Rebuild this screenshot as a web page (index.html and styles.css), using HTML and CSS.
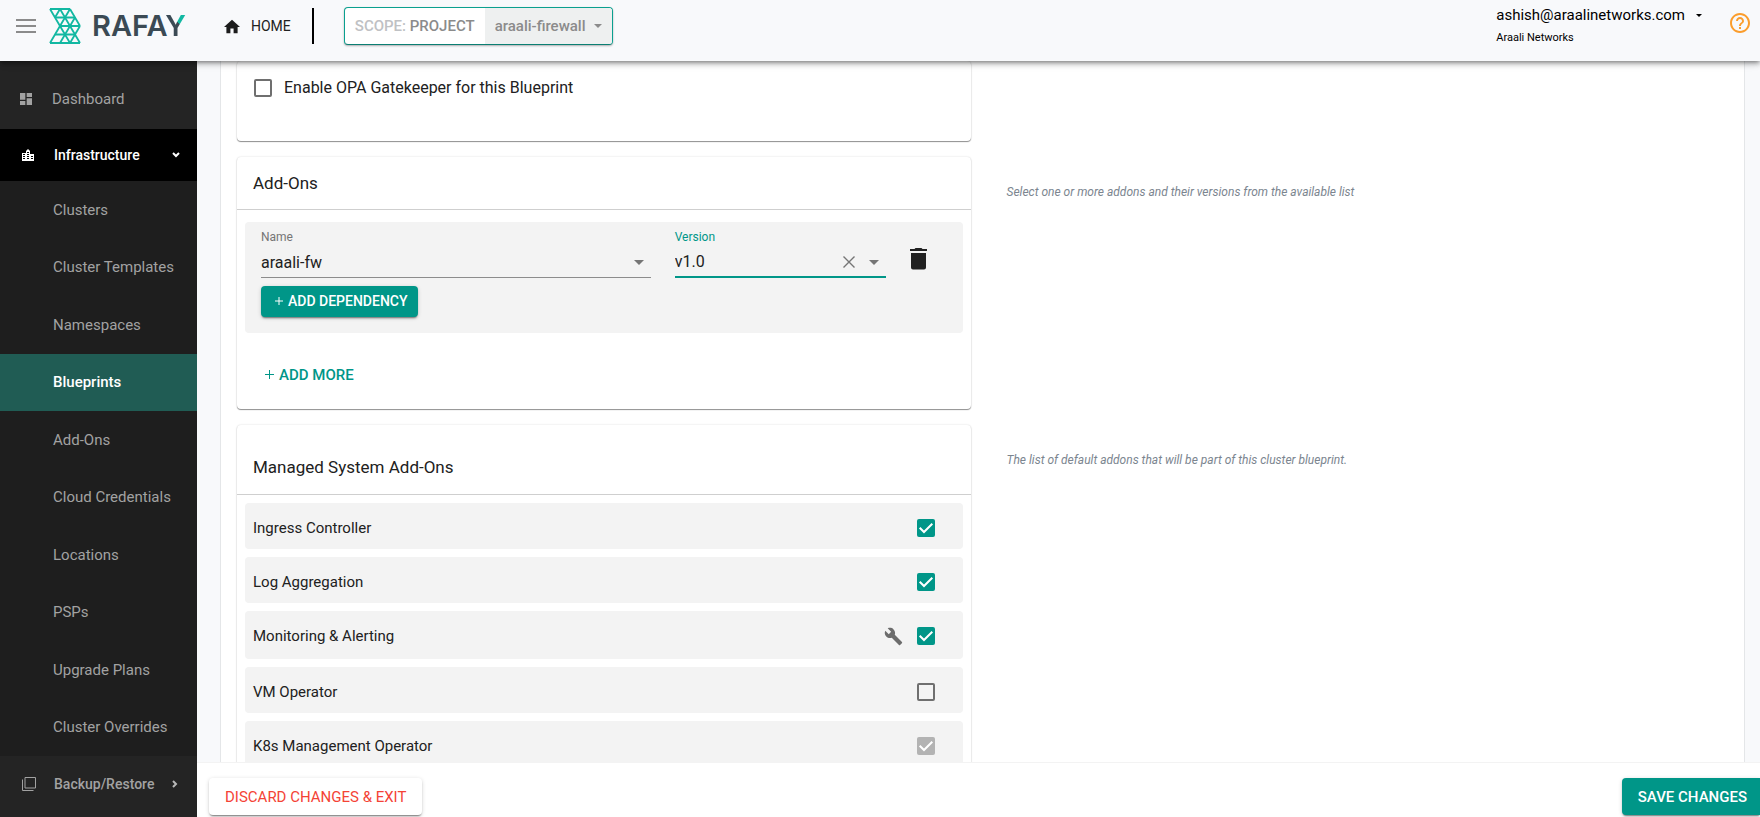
FILE: index.html
```html
<!DOCTYPE html>
<html lang="en">
<head>
<meta charset="utf-8">
<meta name="viewport" content="width=device-width, initial-scale=1">
<title>Blueprint - Rafay</title>
<link rel="stylesheet" href="styles.css">
</head>
<body>
<div class="app">
  <header class="topbar">
    <button class="icon-button menu-button" type="button" aria-label="Toggle menu">
      <svg width="20" height="14" viewBox="0 0 20 14" fill="#8b8b8b"><path d="M0 0h20v2H0zM0 6h20v2H0zM0 12h20v2H0z"/></svg>
    </button>
    <a class="brand" href="#" aria-label="Rafay">
      <svg class="brand-mark" width="32" height="36" viewBox="0 0 32 36" fill="none" stroke="#12b8a2" stroke-width="1.800" stroke-linejoin="round">
        <path d="M1 1H21M6 9.500H26M11 18H31M6 26.500H26M1 35H31"/>
        <path d="M1 1L21 35M11 1L31 35M21 1L31 18"/>
        <path d="M11 1L6 9.500M21 1L1 35M26 9.500L11 35M31 18L21 35"/>
      </svg>
      <span class="brand-name">RAFA<span class="brand-y">Y</span></span>
    </a>
    <a class="home-link" href="#">
      <svg width="16" height="15" viewBox="0 0 20 17" fill="#1c1c1c"><path d="M8 17v-6h4v6h5V9h3L10 0 0 9h3v8z"/></svg>
      HOME
    </a>
    <span class="divider"></span>
    <div class="scope">
      <label class="scope-label" for="project"><span class="scope-prefix">SCOPE:</span> PROJECT</label>
      <div class="scope-value">
        <select class="plain-select" id="project"><option>araali-firewall</option></select>
        <svg width="8" height="4" viewBox="0 0 10 5" fill="#8b8b8b"><path d="M0 0h10L5 5z"/></svg>
      </div>
    </div>
    <div class="account">
      <button class="account-button" type="button">ashish@araalinetworks.com
        <svg width="6" height="3" viewBox="0 0 10 5"><path d="M0 0h10L5 5z"/></svg>
      </button>
      <span class="account-org">Araali Networks</span>
    </div>
    <button class="icon-button help-button" type="button" aria-label="Help">
      <svg width="20" height="20" viewBox="2 2 20 20" fill="#fb9d2c"><path d="M11 18h2v-2h-2v2zm1-16C6.480 2 2 6.480 2 12s4.480 10 10 10 10-4.480 10-10S17.520 2 12 2zm0 18c-4.410 0-8-3.590-8-8s3.590-8 8-8 8 3.590 8 8-3.590 8-8 8zm0-14c-2.210 0-4 1.790-4 4h2c0-1.100.9-2 2-2s2 .9 2 2c0 2-3 1.750-3 5h2c0-2.250 3-2.500 3-5 0-2.210-1.790-4-4-4z"/></svg>
    </button>
  </header>

  <nav class="sidebar" aria-label="Main">
    <a class="nav-item nav-dashboard" href="#">
      <span class="nav-icon"><svg width="12" height="12" viewBox="3 3 18 18" fill="#a2a2a2"><path d="M3 13h8V3H3v10zm0 8h8v-6H3v6zm10 0h8V11h-8v10zm0-18v6h8V3h-8z"/></svg></span>
      Dashboard
    </a>
    <a class="nav-item nav-open" href="#">
      <span class="nav-icon"><svg width="12" height="12" viewBox="0 0 12 12" fill="#fff" fill-rule="evenodd"><path d="M0 4h4V2l2-2 2 2v3h4v7H0zM1 5v1h2V5zM1 7v1h2V7zM1 9v1h2V9zM5 3v1h2V3zM5 5v1h2V5zM5 7v1h2V7zM5 9v1h2V9zM9 7v1h2V7zM9 9v1h2V9z"/></svg></span>
      <span class="nav-text">Infrastructure</span>
      <svg width="8" height="6" viewBox="0 0 8 6" fill="none" stroke="#fff" stroke-width="2"><path d="M1 1l3 3 3-3"/></svg>
    </a>
    <div class="subnav">
      <a class="subnav-item" href="#">Clusters</a>
      <a class="subnav-item" href="#">Cluster Templates</a>
      <a class="subnav-item" href="#">Namespaces</a>
      <a class="subnav-item is-active" href="#" aria-current="page">Blueprints</a>
      <a class="subnav-item" href="#">Add-Ons</a>
      <a class="subnav-item" href="#">Cloud Credentials</a>
      <a class="subnav-item" href="#">Locations</a>
      <a class="subnav-item" href="#">PSPs</a>
      <a class="subnav-item" href="#">Upgrade Plans</a>
      <a class="subnav-item" href="#">Cluster Overrides</a>
    </div>
    <a class="nav-item nav-backup" href="#">
      <span class="nav-icon"><svg width="14" height="14" viewBox="0 0 14 14" fill="none" stroke="#a2a2a2" stroke-width="1"><path d="M3 .5h10.500v10.500H3zM.5 2.500v11h11"/></svg></span>
      <span class="nav-text">Backup/Restore</span>
      <svg width="6" height="8" viewBox="0 0 6 8" fill="none" stroke="#b8b8b8" stroke-width="2"><path d="M1 1l3 3-3 3"/></svg>
    </a>
  </nav>

  <main class="content">
    <div class="sheet">
      <section class="card card-opa">
        <label class="check-label"><input class="checkbox" type="checkbox">Enable OPA Gatekeeper for this Blueprint</label>
      </section>

      <section class="card">
        <h2 class="card-title">Add-Ons</h2>
        <div class="addon">
          <div class="addon-fields">
            <div class="field field-name">
              <label class="field-label" for="addon-name">Name</label>
              <div class="field-control">
                <select class="plain-select" id="addon-name"><option>araali-fw</option></select>
                <svg class="caret" width="10" height="5" viewBox="0 0 10 5" fill="#757575"><path d="M0 0h10L5 5z"/></svg>
              </div>
            </div>
            <div class="field field-version is-focused">
              <label class="field-label" for="addon-version">Version</label>
              <div class="field-control">
                <select class="plain-select" id="addon-version"><option>v1.0</option></select>
                <button class="icon-button" type="button" aria-label="Clear version">
                  <svg width="12" height="12" viewBox="0 0 12 12" stroke="#757575" stroke-width="1.400"><path d="M.5.5l11 11M11.500.5l-11 11"/></svg>
                </button>
                <svg class="caret" width="10" height="5" viewBox="0 0 10 5" fill="#757575"><path d="M0 0h10L5 5z"/></svg>
              </div>
            </div>
            <button class="icon-button delete-button" type="button" aria-label="Delete add-on">
              <svg width="17" height="22" viewBox="0 0 17 22" fill="#212121"><path d="M1 5h15v14.500a2 2 0 0 1-2 2H3a2 2 0 0 1-2-2zM0 1h4.500l1-1h6l1 1H17v2H0z"/></svg>
            </button>
          </div>
          <button class="button button-primary button-small" type="button">
            <svg width="8" height="8" viewBox="0 0 8 8" fill="none" stroke="currentColor"><path d="M4 0v8M0 4h8"/></svg>
            ADD DEPENDENCY
          </button>
        </div>
        <button class="button button-text" type="button">
          <svg width="9" height="9" viewBox="0 0 9 9" fill="none" stroke="currentColor"><path d="M4.500 0v9M0 4.500h9"/></svg>
          ADD MORE
        </button>
      </section>
      <p class="hint">Select one or more addons and their versions from the available list</p>

      <section class="card">
        <h2 class="card-title card-title-tall">Managed System Add-Ons</h2>
        <div class="managed">
          <div class="managed-row">
            <label class="managed-name" for="ingress">Ingress Controller</label>
            <input class="checkbox" type="checkbox" id="ingress" checked>
          </div>
          <div class="managed-row">
            <label class="managed-name" for="logs">Log Aggregation</label>
            <input class="checkbox" type="checkbox" id="logs" checked>
          </div>
          <div class="managed-row managed-row-config">
            <label class="managed-name" for="monitoring">Monitoring &amp; Alerting</label>
            <button class="icon-button" type="button" aria-label="Configure monitoring">
              <svg width="19" height="19" viewBox="0 0 24 24" fill="#6c6c6c"><path d="M22.700 19l-9.100-9.100c.9-2.300.4-5-1.500-6.900-2-2-5-2.400-7.400-1.300L9 6 6 9 1.600 4.700C.4 7.100.9 10.100 2.900 12.100c1.900 1.900 4.600 2.400 6.900 1.500l9.100 9.100c.4.4 1 .4 1.400 0l2.300-2.300c.5-.4.5-1.100.1-1.400z"/></svg>
            </button>
            <input class="checkbox" type="checkbox" id="monitoring" checked>
          </div>
          <div class="managed-row">
            <label class="managed-name" for="vm">VM Operator</label>
            <input class="checkbox" type="checkbox" id="vm">
          </div>
          <div class="managed-row">
            <label class="managed-name" for="k8s">K8s Management Operator</label>
            <input class="checkbox" type="checkbox" id="k8s" checked disabled>
          </div>
        </div>
      </section>
      <p class="hint">The list of default addons that will be part of this cluster blueprint.</p>
    </div>
  </main>

  <footer class="actions">
    <button class="button button-danger" type="button">DISCARD CHANGES &amp; EXIT</button>
    <button class="button button-primary button-save" type="button">SAVE CHANGES</button>
  </footer>
</div>
</body>
</html>
```

FILE: styles.css
```css
* {
  box-sizing: border-box;
}

body {
  margin: 0;
  font-family: Roboto, "Liberation Sans", sans-serif;
  font-size: 15px;
  line-height: 20px;
  color: #212121;
}

a {
  color: inherit;
  text-decoration: none;
}

svg {
  display: block;
  flex: none;
}

button,
select {
  font: inherit;
  color: inherit;
}

.app {
  display: grid;
  grid-template: 61px minmax(0, 1fr) 55px / 197px minmax(0, 1fr);
  grid-template-areas:
    "top top"
    "nav main"
    "nav actions";
  height: 100vh;
  overflow: hidden;
}

.icon-button {
  display: flex;
  padding: 0;
  border: 0;
  background: none;
  cursor: pointer;
}

.plain-select {
  flex: 1;
  min-width: 0;
  padding: 0;
  border: 0;
  outline: 0;
  background: none;
  appearance: none;
}

/* Top bar */

.topbar {
  grid-area: top;
  z-index: 1;
  display: flex;
  align-items: flex-start;
  padding: 7px 10px 0 16px;
  background: #f8f9fb;
  box-shadow: 0 2px 4px -1px rgba(0, 0, 0, 0.4), 0 4px 5px rgba(0, 0, 0, 0.14), 0 1px 10px rgba(0, 0, 0, 0.12);
}

.menu-button {
  margin: 12px 13px 0 0;
}

.brand {
  display: flex;
  align-items: center;
  gap: 11px;
  height: 38px;
}

.brand-name {
  font-family: Inter, Roboto, sans-serif;
  font-size: 29px;
  font-weight: 600;
  line-height: 38px;
  color: #3b4a54;
}

.brand-y {
  background: linear-gradient(45deg, #3b4a54 60%, #12b8a2 60%);
  background-clip: text;
  color: transparent;
}

.home-link {
  display: flex;
  align-items: center;
  gap: 11px;
  height: 38px;
  margin-left: 38px;
  font-size: 14px;
}

.divider {
  width: 2px;
  height: 36px;
  margin: 1px 30px 0 21px;
  background: #000;
}

.scope {
  display: flex;
  height: 38px;
  overflow: hidden;
  border: 1px solid #0aa08f;
  border-bottom-color: #0b7f73;
  border-radius: 4px;
  background: #fff;
  box-shadow: 0 1px 2px rgba(0, 0, 0, 0.3);
  font-weight: 500;
  color: #8b8b8b;
}

.scope-label {
  padding: 8px 10px;
}

.scope-prefix {
  color: #bfc1c4;
}

.scope-value {
  display: flex;
  align-items: center;
  gap: 8px;
  padding: 0 10px;
  background: #eef0f0;
}

.account {
  display: flex;
  flex-direction: column;
  align-items: flex-start;
  margin-left: auto;
  color: #000;
  font-size: 11px;
}

.account-button {
  display: flex;
  align-items: center;
  gap: 11px;
  margin-top: -3px;
  padding: 0;
  border: 0;
  background: none;
  font-size: 15px;
  line-height: 22px;
}

.account-org {
  padding-top: 2px;
}

.help-button {
  margin: 6px 0 0 28px;
}

/* Side navigation */

.sidebar {
  grid-area: nav;
  display: flex;
  flex-direction: column;
  background: #1e1e1e;
  color: #a2a2a2;
}

.nav-item {
  display: flex;
  align-items: center;
  padding: 0 17px 0 20px;
  background: #242424;
}

.nav-icon {
  display: flex;
  width: 32px;
}

.nav-text {
  flex: 1;
  font-size: 14px;
  font-weight: 500;
}

.nav-dashboard {
  flex: 0 0 68px;
  padding-top: 8px;
}

.nav-open {
  flex: 0 0 52px;
  padding-left: 22px;
  background: #000;
  color: #fff;
}

.nav-backup {
  flex: 0 0 61px;
  padding: 0 19px 6px 22px;
}

.subnav {
  display: flex;
  flex: 1;
  flex-direction: column;
}

.subnav-item {
  display: flex;
  flex: 1;
  align-items: center;
  padding-left: 53px;
}

.subnav-item.is-active {
  background: #205c54;
  color: #fff;
  font-weight: 500;
}

/* Form */

.content {
  grid-area: main;
  overflow: hidden;
  padding: 0 15px 0 23px;
  background: #f8f9fb;
}

.sheet {
  display: grid;
  grid-template-columns: minmax(0, 1fr) minmax(0, 1fr);
  gap: 16px 24px;
  padding: 0 16px;
  border: solid #e4e6e8;
  border-width: 0 1px;
  background: #fff;
}

.card {
  grid-column: 1;
  border-radius: 4px;
  background: #fff;
  box-shadow: 0 1px 1px rgba(0, 0, 0, 0.42), 0 0 2px rgba(0, 0, 0, 0.16);
}

.card-opa {
  height: 80px;
  padding: 17px;
}

.check-label {
  display: flex;
  align-items: center;
  gap: 12px;
  font-size: 16px;
}

.card-title {
  margin: 0;
  padding: 16px;
  border-bottom: 1px solid #cfcfcf;
  font-size: 17px;
  font-weight: 400;
}

.card-title-tall {
  padding: 32px 16px 17px;
}

.addon {
  margin: 12px 8px 0;
  padding: 8px 16px 16px;
  border-radius: 4px;
  background: #f3f3f3;
}

.addon-fields {
  display: grid;
  grid-template-columns: minmax(0, 390fr) minmax(0, 212fr) 36px;
  gap: 24px;
  align-items: center;
  margin-bottom: 8px;
}

.field-label {
  display: block;
  font-size: 12px;
  line-height: 14px;
  color: #757575;
}

.field-control {
  display: flex;
  align-items: center;
  height: 34px;
  padding-top: 4px;
  border-bottom: 1px solid #8c8c8c;
  font-size: 16px;
}

.caret {
  margin: 0 7px 0 14px;
}

.is-focused .field-label {
  color: #009688;
}

.is-focused .field-control {
  border-bottom: 2px solid #009688;
}

.delete-button {
  padding-top: 10px;
}

.hint {
  grid-column: 2;
  margin: 0;
  padding: 25px 12px 0;
  font-size: 12px;
  font-style: italic;
  color: #7b858f;
}

/* Buttons */

.button {
  display: inline-flex;
  align-items: center;
  gap: 5px;
  height: 37px;
  padding: 0 16px;
  border: 0;
  border-radius: 4px;
  background: #fff;
  box-shadow: 0 2px 2px -1px rgba(0, 0, 0, 0.5), 0 1px 4px rgba(0, 0, 0, 0.16);
  white-space: nowrap;
  cursor: pointer;
}

.button-primary {
  background: #009688;
  color: #fff;
  font-weight: 500;
}

.button-small {
  height: 31px;
  padding: 0 10px 2px 14px;
  font-size: 14px;
}

.button-text {
  margin: 23px 8px 16px 12px;
  background: none;
  box-shadow: none;
  color: #009688;
  font-weight: 500;
}

.button-danger {
  color: #f44336;
}

.button-save {
  padding-right: 13px;
  border-radius: 4px 0 0 4px;
}

/* Managed add-ons */

.managed {
  display: grid;
  gap: 8px;
  padding: 8px;
}

.managed-row {
  display: flex;
  align-items: center;
  gap: 14px;
  min-height: 46px;
  padding: 4px 28px 0 8px;
  border-radius: 4px;
  background: #f3f3f3;
}

.managed-row-config {
  min-height: 48px;
  padding-top: 2px;
}

.managed-name {
  flex: 1;
}

.checkbox {
  flex: none;
  width: 18px;
  height: 18px;
  margin: 0;
  border: 2px solid #6f6f6f;
  border-radius: 2px;
  appearance: none;
}

.checkbox:checked {
  border: 0;
  background: #009688 url("data:image/svg+xml,%3Csvg xmlns='http://www.w3.org/2000/svg' viewBox='0 0 18 18' fill='none' stroke='%23fff' stroke-width='2'%3E%3Cpath d='M2.700 8.700L7 13l8.300-8.300'/%3E%3C/svg%3E");
}

.checkbox:disabled {
  background-color: #b3b3b3;
}

/* Footer */

.actions {
  grid-area: actions;
  display: flex;
  justify-content: space-between;
  align-items: flex-start;
  padding: 15px 0 0 12px;
  border-top: 1px solid #f3f3f3;
  background: #fff;
}
```
